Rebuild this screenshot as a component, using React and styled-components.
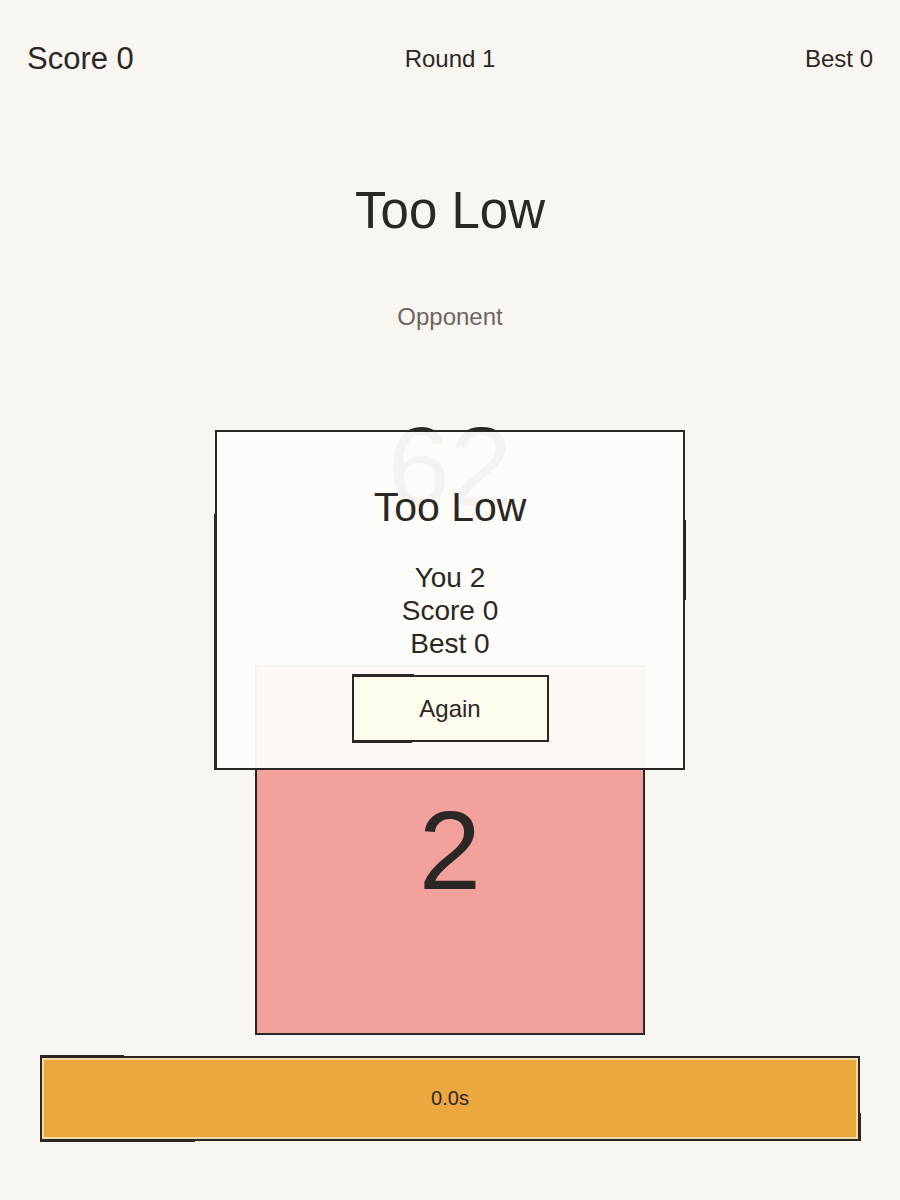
import styled, { createGlobalStyle } from 'styled-components'

const ink = '#2b2724'

const GlobalStyle = createGlobalStyle`
  html, body {
    margin: 0;
    padding: 0;
    background: #f9f6f1;
    font-family: "Liberation Sans", Arial, sans-serif;
    color: ${ink};
  }
`

const Page = styled.div`
  position: relative;
  width: 900px;
  height: 1200px;
  display: flex;
  flex-direction: column;
  align-items: center;
  overflow: hidden;
`

const TopBar = styled.div`
  align-self: stretch;
  height: 118px;
  padding: 0 27px;
  display: grid;
  grid-template-columns: 1fr auto 1fr;
  align-items: center;
`

const Stat = styled.div`
  font-size: ${p => p.$size || 24}px;
  text-align: ${p => p.$align || 'left'};
`

const Verdict = styled.h1`
  margin: 63px 0 0;
  font-size: 51px;
  font-weight: 400;
  line-height: 60px;
`

const Label = styled.div`
  margin-top: 61px;
  font-size: 24px;
  line-height: 30px;
  color: #6b6660;
`

const OpponentNumber = styled.div`
  margin-top: 70px;
  font-size: 112px;
  line-height: 129px;
`

// hand-drawn look: a short stroke drawn slightly off the box edge
const Sketch = styled.span`
  position: absolute;
  ${p => p.$side}: -${p => p.$off || 3}px;
  ${p => (p.$side === 'left' || p.$side === 'right')
    ? `top: ${p.$from}; height: ${p.$len}; width: 2px;`
    : `left: ${p.$from}; width: ${p.$len}; height: 2px;`}
  background: ${ink};
`

const PlayerCard = styled.div`
  position: relative;
  margin-top: 134px;
  width: 390px;
  height: 370px;
  box-sizing: border-box;
  border: 2px solid ${ink};
  background: #f2a19c;
  display: flex;
  align-items: center;
  justify-content: center;
  font-size: 112px;
`

const TimerBar = styled.div`
  position: relative;
  margin-top: 21px;
  width: 820px;
  height: 85px;
  box-sizing: border-box;
  border: 2px solid ${ink};
  box-shadow: inset 0 0 0 2px #f5d9a6;
  background: #eca83e;
  display: flex;
  align-items: center;
  justify-content: center;
  font-size: 20px;
`

const Modal = styled.div`
  position: absolute;
  top: 430px;
  left: 215px;
  width: 470px;
  height: 340px;
  box-sizing: border-box;
  border: 2px solid ${ink};
  background: rgba(253, 252, 248, 0.96);
  display: flex;
  flex-direction: column;
  align-items: center;
  padding-top: 50px;
`

const ModalTitle = styled.h2`
  margin: 0;
  font-size: 41px;
  font-weight: 400;
  line-height: 50px;
`

const Lines = styled.div`
  margin-top: 29px;
  font-size: 28px;
  line-height: 33px;
  text-align: center;
`

const AgainButton = styled.button`
  position: relative;
  margin-top: 15px;
  width: 197px;
  height: 67px;
  box-sizing: border-box;
  border: 2px solid ${ink};
  background: #fdfbee;
  color: ${ink};
  font-family: inherit;
  font-size: 24px;
  cursor: pointer;
`

export default function App() {
  return (
    <>
      <GlobalStyle />
      <Page>
        <TopBar>
          <Stat $size={31}>Score 0</Stat>
          <Stat $align="center">Round 1</Stat>
          <Stat $align="right">Best 0</Stat>
        </TopBar>
        <Verdict>Too Low</Verdict>
        <Label>Opponent</Label>
        <OpponentNumber>62</OpponentNumber>
        <PlayerCard>2</PlayerCard>
        <TimerBar>
          0.0s
          <Sketch $side="top" $off={3} $from="-2px" $len="84px" />
          <Sketch $side="bottom" $off={3} $from="-2px" $len="155px" />
          <Sketch $side="right" $off={3} $from="55px" $len="28px" />
        </TimerBar>
        <Modal>
          <Sketch $side="left" $off={3} $from="82px" $len="256px" />
          <Sketch $side="right" $off={3} $from="88px" $len="80px" />
          <ModalTitle>Too Low</ModalTitle>
          <Lines>
            <div>You 2</div>
            <div>Score 0</div>
            <div>Best 0</div>
          </Lines>
          <AgainButton>
            Again
            <Sketch $side="bottom" $off={3} $from="-2px" $len="60px" />
            <Sketch $side="top" $off={3} $from="-2px" $len="62px" />
          </AgainButton>
        </Modal>
      </Page>
    </>
  )
}
